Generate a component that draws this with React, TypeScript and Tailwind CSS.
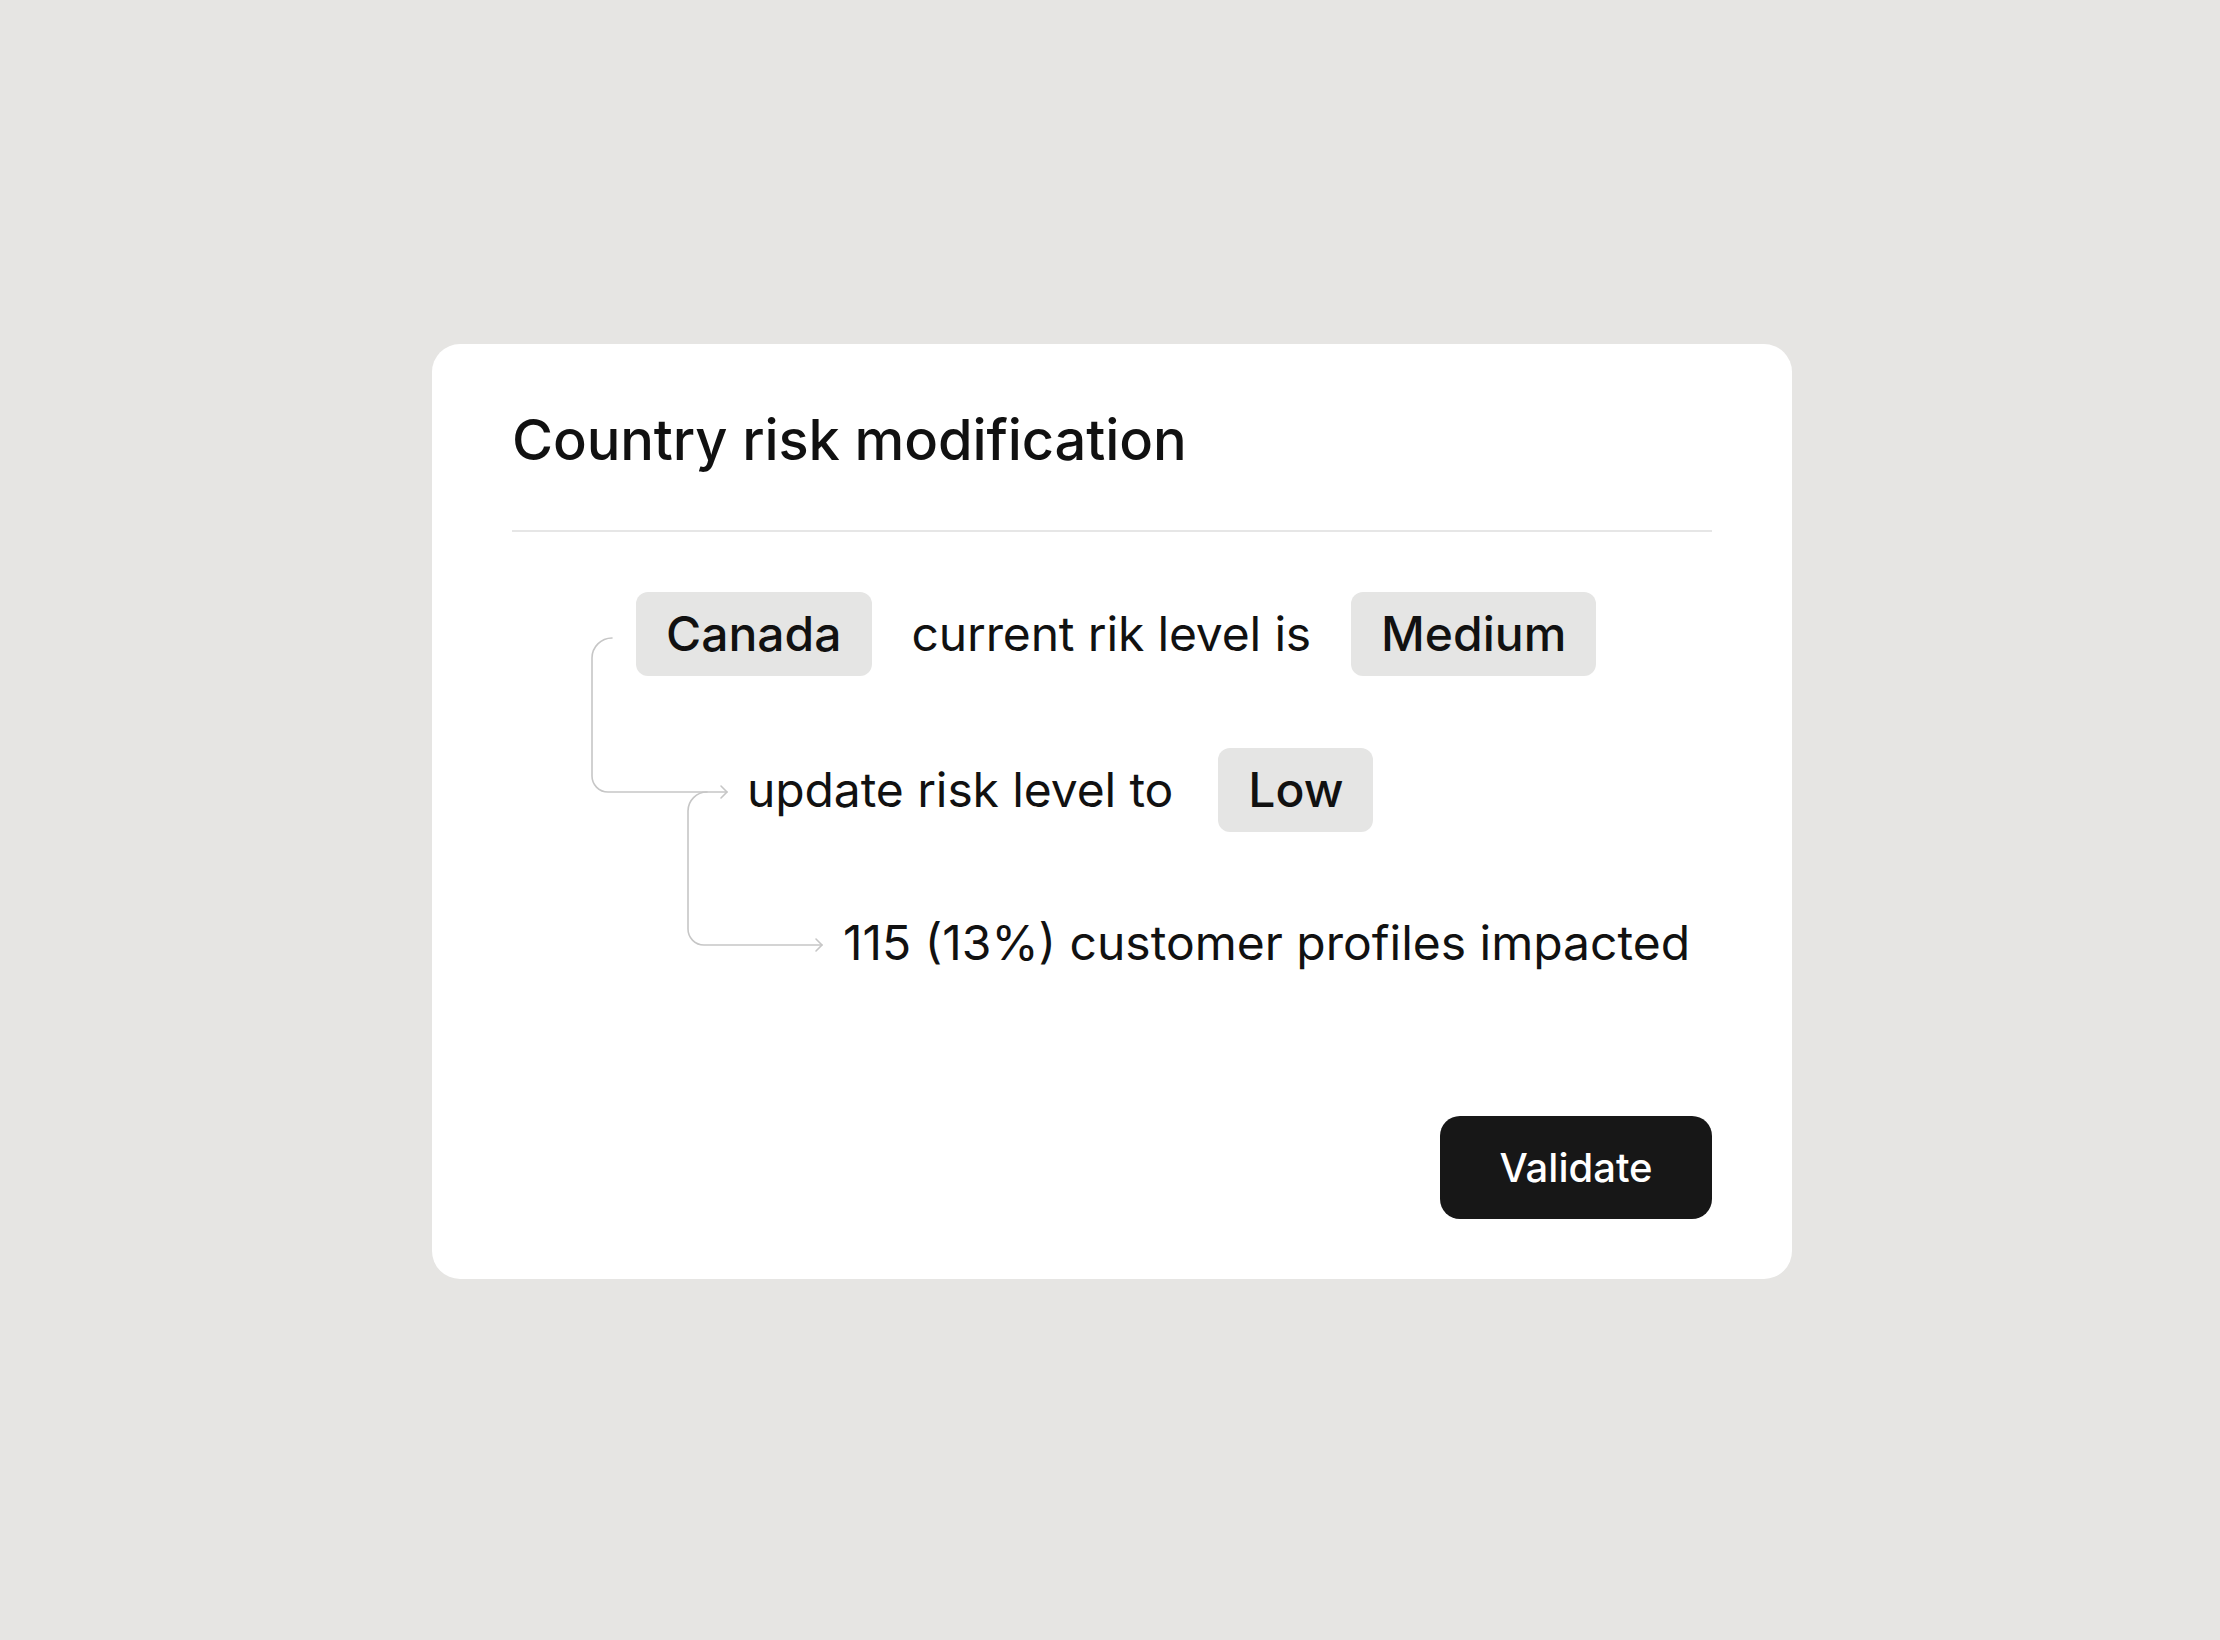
import React from "react";

function Chip({ children }: { children: React.ReactNode }) {
  return (
    <span className="inline-flex h-[84px] items-center rounded-[12px] bg-[#e5e5e4] px-[30px] text-[48px] font-medium leading-[58px] text-[#111111]">
      {children}
    </span>
  );
}

function Connectors() {
  return (
    <svg
      className="pointer-events-none absolute left-0 top-0"
      width="420"
      height="400"
      viewBox="0 0 420 400"
      fill="none"
      stroke="#c6c6c6"
      strokeWidth="1.6"
      strokeLinecap="round"
      strokeLinejoin="round"
    >
      <path d="M100 46 A20 20 0 0 0 80 66 V184 A16 16 0 0 0 96 200 H215" />
      <path d="M209 194 L215 200 L209 206" />
      <path d="M195 200 A19 19 0 0 0 176 219 V337 A16 16 0 0 0 192 353 H310" />
      <path d="M304 347 L310 353 L304 359" />
    </svg>
  );
}

export default function App() {
  return (
    <div className="min-h-[1640px] w-[2220px] bg-[#e6e5e3] pl-[432px] pt-[344px] font-['Inter',sans-serif] text-[#111111]">
      <div className="flex w-[1360px] flex-col rounded-[28px] bg-white px-[80px] pb-[60px] pt-[62px]">
        <h1 className="text-[56px] font-medium leading-[68px] tracking-[-0.1px]">
          Country risk modification
        </h1>
        <div className="mt-[56px] h-[2px] bg-[#e6e6e6]" />
        <div className="relative mt-[60px] flex flex-col">
          <Connectors />
          <div className="ml-[124px] flex h-[84px] items-center gap-[40px]">
            <Chip>Canada</Chip>
            <span className="text-[48px] leading-[58px] tracking-[-0.15px]">current rik level is</span>
            <Chip>Medium</Chip>
          </div>
          <div className="ml-[235px] mt-[72px] flex h-[84px] items-center gap-[45px]">
            <span className="text-[48px] leading-[58px] tracking-[-0.1px]">update risk level to</span>
            <Chip>Low</Chip>
          </div>
          <div className="ml-[331px] mt-[69px] flex h-[84px] items-center">
            <span className="text-[48px] leading-[58px]">115 (13%) customer profiles impacted</span>
          </div>
        </div>
        <div className="mt-[131px] flex justify-end">
          <button className="flex h-[103px] w-[272px] items-center justify-center rounded-[20px] bg-[#171717] text-[40px] font-medium text-white">
            Validate
          </button>
        </div>
      </div>
    </div>
  );
}
